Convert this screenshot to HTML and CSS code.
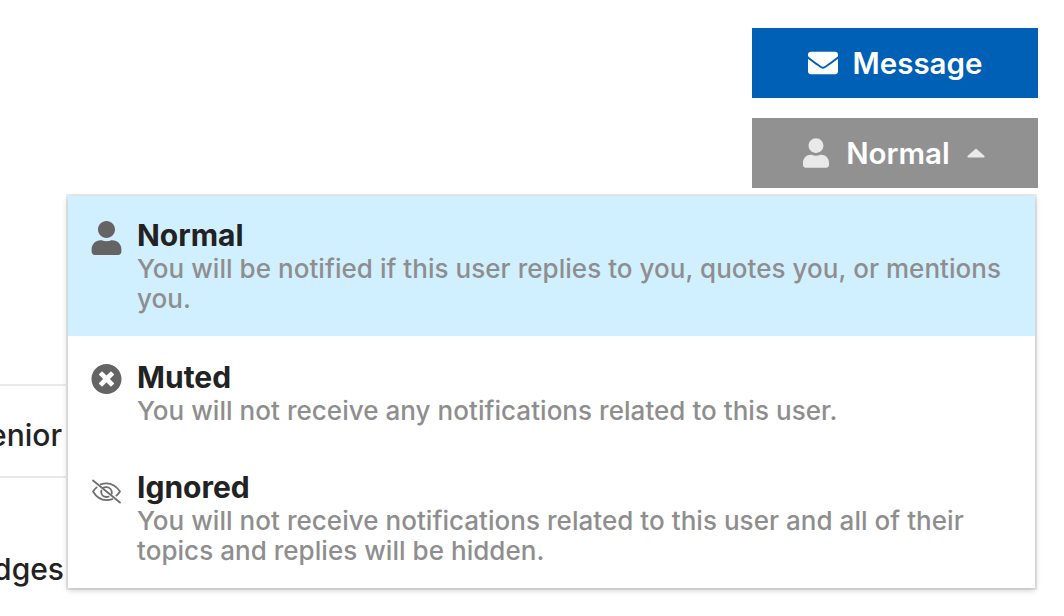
FILE: index.html
```html
<!DOCTYPE html>
<html lang="en">
<head>
<meta charset="utf-8">
<title>User notifications</title>
<link rel="stylesheet" href="styles.css">
</head>
<body>
<div class="page">
  <div class="actions">
    <button class="btn btn-primary">
      <svg class="ico-mail" viewBox="0 0 512 512"><path fill="currentColor" d="M502.3 190.8c3.9-3.1 9.7-.2 9.7 4.7V400c0 26.5-21.5 48-48 48H48c-26.5 0-48-21.5-48-48V195.6c0-5 5.700-7.800 9.700-4.700 22.400 17.400 52.100 39.500 154.100 113.600 21.100 15.400 56.700 47.800 92.200 47.600 35.700.3 72-32.800 92.300-47.600 102-74.100 131.600-96.300 154-113.700zM256 320c23.200.4 56.600-29.200 73.400-41.400 132.700-96.300 142.800-104.700 173.400-128.700 5.800-4.500 9.200-11.500 9.200-18.900v-19c0-26.500-21.500-48-48-48H48C21.500 64 0 85.500 0 112v19c0 7.400 3.400 14.300 9.200 18.900 30.600 23.900 40.700 32.400 173.400 128.700 16.800 12.200 50.200 41.800 73.400 41.400z"/></svg>
      <span class="btn-label">Message</span>
    </button>
    <button class="btn btn-muted">
      <svg class="ico-user" viewBox="0 0 448 512"><path fill="currentColor" d="M224 256c70.700 0 128-57.300 128-128S294.700 0 224 0 96 57.300 96 128s57.300 128 128 128zm89.600 32h-16.700c-22.200 10.200-46.900 16-72.900 16s-50.600-5.800-72.900-16h-16.700C60.200 288 0 348.200 0 422.400V464c0 26.500 21.500 48 48 48h352c26.500 0 48-21.500 48-48v-41.600c0-74.200-60.200-134.400-134.400-134.400z"/></svg>
      <span class="btn-label">Normal</span>
      <svg class="ico-caret" viewBox="0 0 18 10"><path fill="currentColor" d="M9 0.500 L17.500 8 Q18 9.500 16.500 9.500 H1.500 Q0 9.500 0.500 8 Z"/></svg>
    </button>
  </div>
  <div class="behind">
    <div class="behind-row row-senior"><span>Senior</span></div>
    <div class="behind-row row-badges"><span>Badges</span></div>
  </div>
  <ul class="menu">
    <li class="item item-active">
      <svg class="item-icon" viewBox="0 0 448 512"><path fill="currentColor" d="M224 256c70.700 0 128-57.300 128-128S294.700 0 224 0 96 57.300 96 128s57.300 128 128 128zm89.600 32h-16.700c-22.200 10.200-46.900 16-72.900 16s-50.600-5.800-72.900-16h-16.700C60.200 288 0 348.200 0 422.400V464c0 26.500 21.500 48 48 48h352c26.500 0 48-21.500 48-48v-41.600c0-74.200-60.200-134.400-134.400-134.400z"/></svg>
      <div class="item-body">
        <div class="item-title">Normal</div>
        <div class="item-desc">You will be notified if this user replies to you, quotes you, or mentions you.</div>
      </div>
    </li>
    <li class="item">
      <svg class="item-icon" viewBox="0 0 512 512"><path fill="currentColor" d="M256 8C119 8 8 119 8 256s111 248 248 248 248-111 248-248S393 8 256 8zm121.600 313.100c4.700 4.700 4.700 12.300 0 17L338 377.600c-4.700 4.700-12.300 4.700-17 0L256 312l-65.100 65.600c-4.700 4.700-12.300 4.700-17 0L134.400 338c-4.700-4.700-4.700-12.300 0-17l65.600-65-65.600-65.100c-4.700-4.700-4.700-12.300 0-17l39.600-39.600c4.700-4.700 12.300-4.700 17 0l65 65.700 65.100-65.600c4.700-4.700 12.300-4.700 17 0l39.600 39.600c4.700 4.700 4.700 12.300 0 17L312 256l65.600 65.100z"/></svg>
      <div class="item-body">
        <div class="item-title">Muted</div>
        <div class="item-desc">You will not receive any notifications related to this user.</div>
      </div>
    </li>
    <li class="item">
      <svg class="item-icon" viewBox="0 0 30 26" fill="none" stroke="currentColor" stroke-width="1.900" stroke-linecap="round"><path d="M1 1.500 L29 24.500"/><path d="M9 5.500 C11 4.800 13 4.500 15 4.500 C21 4.500 26 8.500 29 13 C28 14.500 26.800 16 25.300 17.300"/><path d="M21 21 C19 21.700 17 22 15 22 C9 22 4 18 1 13 C2 11.500 3.300 10 4.800 8.700"/><path d="M11 9.500 C12.500 8.500 14 8.300 15.500 8.500 C18.500 9 20.500 11.500 20.500 14 C20.500 14.500 20.400 15 20.300 15.400"/><path d="M9.700 12 C9.500 12.600 9.500 13.200 9.500 13.500 C9.500 16.500 12 18.700 15 18.700 C15.800 18.700 16.500 18.500 17.200 18.300"/></svg>
      <div class="item-body">
        <div class="item-title">Ignored</div>
        <div class="item-desc">You will not receive notifications related to this user and all of their topics and replies will be hidden.</div>
      </div>
    </li>
  </ul>
</div>
</body>
</html>
```
FILE: styles.css
```css
* { box-sizing: border-box; }
html, body { margin: 0; padding: 0; background: #fff; }
body {
  width: 1064px;
  height: 616px;
  overflow: hidden;
  font-family: Inter, "Liberation Sans", sans-serif;
  color: #222;
}
.page { position: relative; width: 1064px; height: 616px; }
.actions {
  display: flex;
  flex-direction: column;
  gap: 20px;
  width: 286px;
  margin-left: 752px;
  padding-top: 28px;
}
.btn {
  display: flex;
  align-items: center;
  justify-content: center;
  height: 70px;
  border: 0;
  padding: 0;
  font: 600 29.500px/1 Inter, "Liberation Sans", sans-serif;
  color: #fff;
}
.btn-label { padding-top: 2px; }
.btn-primary { background: #0060b6; gap: 15px; }
.btn-muted { background: #919191; color: #fff; padding-right: 2px; }
.ico-mail { width: 30px; height: 30px; }
.ico-user { width: 26px; height: 30px; color: #e9e9e9; margin-right: 17px; }
.ico-caret { width: 18px; height: 10px; color: #e9e9e9; margin-left: 17px; }
.behind { margin-top: 196px; width: 66px; }
.behind-row {
  display: flex;
  justify-content: flex-end;
  overflow: hidden;
  font-size: 30px;
  font-weight: 500;
  line-height: 35px;
  white-space: nowrap;
  color: #222;
}
.row-senior { height: 92px; border-top: 2px solid #e9e9e9; padding-top: 32px; }
.row-badges { height: 130px; border-top: 2px solid #e9e9e9; padding-top: 74px; }
.row-badges span { margin-right: 2px; }
.row-senior span { margin-right: 4px; }
.menu {
  position: absolute;
  left: 68px;
  top: 196px;
  width: 967px;
  height: 392px;
  margin: 0;
  padding: 0;
  list-style: none;
  background: #fff;
  box-shadow: 0 2px 6px rgba(0,0,0,0.22), 0 0 0 2px rgba(0,0,0,0.07);
}
.item {
  display: flex;
  padding: 24px 24px 20px 23px;
  gap: 15px;
}
.item-active { background: #d1f0ff; height: 140px; padding-top: 22px; }
.item:nth-child(2) { height: 110px; }
.item-icon { width: 31px; height: 34px; flex: none; color: #646464; margin-top: 3px; }
.item:nth-child(2) .item-icon { margin-top: 2px; }
.item:last-child .item-icon { height: 25px; margin-top: 9px; color: #6f6f6f; }
.item-body { flex: 1; min-width: 0; }
.item-title {
  font-size: 30px;
  line-height: 34px;
  margin-bottom: 2px;
  font-weight: 700;
  color: #222;
}
.item-desc {
  font-size: 26px;
  letter-spacing: 0.040px;
  line-height: 30px;
  font-weight: 500;
  color: #8e8e8e;
}
```
